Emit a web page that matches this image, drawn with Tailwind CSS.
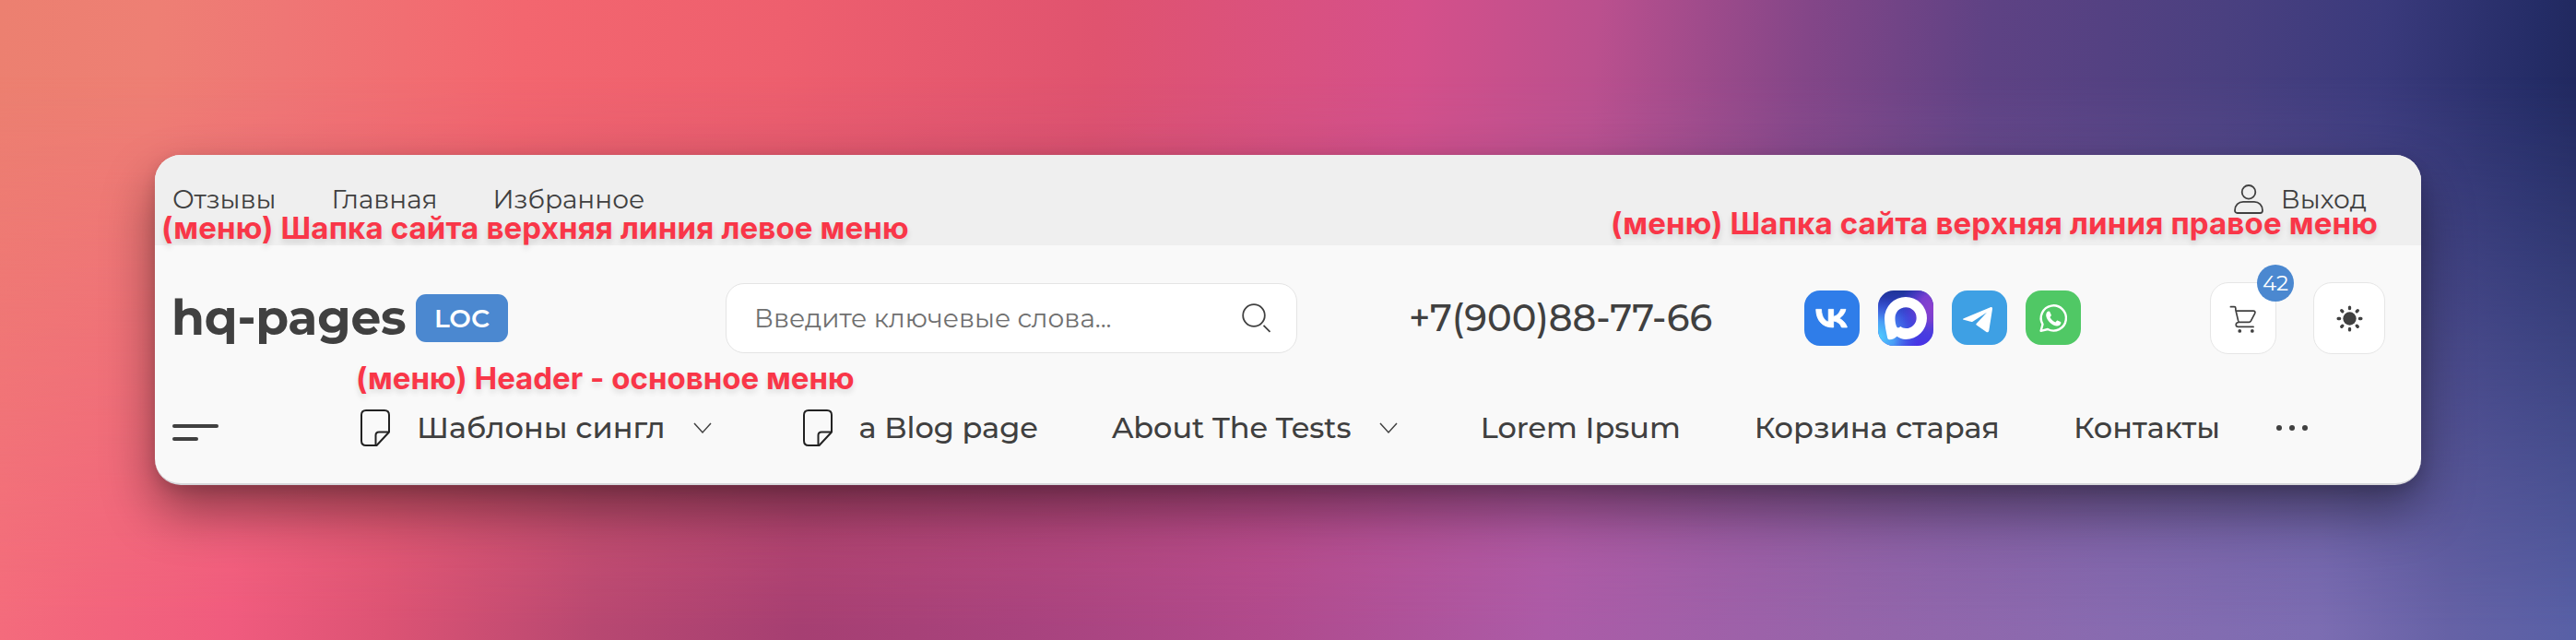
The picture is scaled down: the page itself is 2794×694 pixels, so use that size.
<!DOCTYPE html>
<html lang="ru">
<head>
    <meta charset="UTF-8">
    <meta name="viewport" content="width=device-width, initial-scale=1.0">
    <title>hq-pages</title>
    <script src="https://cdn.jsdelivr.net/npm/@tailwindcss/browser@4"></script>
</head>
<body class="font-['Montserrat','Inter',sans-serif] text-[#404040]">
    <div class="relative h-[694px] w-[2794px] overflow-hidden px-[168px] pt-[168px] bg-[linear-gradient(94deg,#ec8070_0%,#ee7f74_6%,#ef7675_11%,#f3666f_20%,#ee5f6e_30%,#e0536f_42%,#d5508a_54%,#bb508e_61%,#844688_69%,#5e4284_76%,#4a4080_85%,#3a3a7c_91%,#242c66_97%,#1e2558_100%)]">
        <!-- Lower half of the backdrop -->
        <div class="absolute inset-0 bg-[linear-gradient(90deg,#f46b7c_0%,#f05b7e_9%,#dc5374_15%,#b84871_23%,#a63f72_31%,#a8437e_40%,#b04a8c_49%,#ac5ba7_60%,#9565aa_72%,#886bb0_82%,#7c6db2_90%,#6662a6_95%,#5860a6_100%)] [mask-image:linear-gradient(to_bottom,transparent_12%,black_98%)]"></div>

        <header class="relative h-[358px] w-[2458px] rounded-[28px] border-b-2 border-[#d6d6da] bg-[#f9f9f9] shadow-[0_28px_56px_rgba(0,0,0,0.42),0_6px_16px_rgba(0,0,0,0.12)]">
            <!-- Top line -->
            <div class="flex h-[98px] items-center justify-between rounded-t-[28px] bg-[#efefef] pr-[59px] pb-[2px] pl-[19px] text-[28px]">
                <nav class="flex gap-[60px]">
                    <a href="#">Отзывы</a>
                    <a href="#">Главная</a>
                    <a href="#">Избранное</a>
                </nav>
                <a href="#" class="flex items-center gap-[19px]">
                    <svg class="h-8 w-8" viewBox="0 0 32 32" fill="none" stroke="#404040" stroke-width="1.8">
                        <circle cx="16" cy="8.3" r="7.3"/>
                        <path d="M1 28.2C1 22.5 5 18.9 10 18.9h12c5 0 9 3.6 9 9.3 0 1.7-1 2.8-2.6 2.8H3.6C2 31 1 29.9 1 28.2z"/>
                    </svg>
                    <span>Выход</span>
                </a>
            </div>

            <!-- Logo, search, contacts -->
            <div class="flex h-[158px] items-center pl-[18px]">
                <a href="#" class="flex w-[601px] items-center">
                    <span class="w-[265px] text-[52px] font-bold tracking-[-0.3px]">hq-pages</span>
                    <span class="flex h-[52px] w-[100px] items-center justify-center rounded-[11px] bg-[#4b88d0] text-[28px] font-semibold text-white">LOC</span>
                </a>
                <div class="flex h-[76px] w-[620px] items-center justify-between rounded-[20px] border-[1.5px] border-[#e4e4e4] bg-white pr-[27px] pl-[30px] text-[28px] text-[#707070]">
                    <span>Введите ключевые слова...</span>
                    <svg class="h-8 w-8" viewBox="0 0 32 32" fill="none" stroke="#404040" stroke-width="1.8">
                        <circle cx="13" cy="13" r="11.8"/>
                        <path d="M23.5 23.8l7 7"/>
                    </svg>
                </div>
                <a href="#" class="ml-[121px] w-[429px] text-[40px] font-medium">+7(900)88-77-66</a>
                <div class="flex gap-5">
                    <svg class="size-[60px]" viewBox="0 0 60 60">
                        <rect width="60" height="60" rx="17" fill="#2f7de9"/>
                        <path transform="translate(7.7 10.2) scale(1.8 1.7)" fill="#fff" stroke="#fff" stroke-width=".5" stroke-linejoin="round" d="M12.9 17.5C6.6 17.5 3 13.2 2.8 6h3.2c.1 5.3 2.4 7.5 4.3 8V6h3v4.6c1.8-.2 3.7-2.3 4.4-4.6h3c-.5 2.8-2.6 4.9-4 5.8 1.5.7 3.9 2.5 4.8 5.7h-3.3c-.7-2.2-2.5-3.8-4.9-4.1v4.1h-.4z"/>
                    </svg>
                    <svg class="size-[60px]" viewBox="0 0 60 60">
                        <defs>
                            <radialGradient id="maxCyan" cx="0" cy=".85" r=".75">
                                <stop offset="0" stop-color="#4fd0ff"/>
                                <stop offset=".4" stop-color="#4a9cf5"/>
                                <stop offset="1" stop-color="#3a50e0" stop-opacity="0"/>
                            </radialGradient>
                            <radialGradient id="maxViolet" cx="1" cy=".3" r=".6">
                                <stop offset="0" stop-color="#8c3fce"/>
                                <stop offset=".4" stop-color="#7a3fd0"/>
                                <stop offset="1" stop-color="#4a38e0" stop-opacity="0"/>
                            </radialGradient>
                            <linearGradient id="maxBase" x1="0" y1="0" x2="0" y2="1">
                                <stop offset="0" stop-color="#1e3499"/>
                                <stop offset=".5" stop-color="#3a48d8"/>
                                <stop offset="1" stop-color="#4a32e6"/>
                            </linearGradient>
                        </defs>
                        <rect width="60" height="60" rx="17" fill="url(#maxBase)"/>
                        <rect width="60" height="60" rx="17" fill="url(#maxCyan)"/>
                        <rect width="60" height="60" rx="17" fill="url(#maxViolet)"/>
                        <path fill="#fff" fill-rule="evenodd" d="M30 7a23 23 0 0 1 0 46c-4 0-6.8-1.2-9.5-3.2-1.8 2-5.3 3.6-8.3 3.4-1.4-.1-1.9-1-2.1-2.2C9 45 7 38 7 30A23 23 0 0 1 30 7zM30.2 18.2c-7 0-11.4 5-11.7 11.3-.2 4 1 9.8 2.6 10.8 1 .5 2.4-.5 3.2-1.2 1.6 1.1 3.3 2 5.9 2a11.45 11.45 0 0 0 0-22.9z"/>
                    </svg>
                    <svg class="size-[60px]" viewBox="0 0 60 60">
                        <rect width="60" height="59" rx="17" fill="#3ea0e4"/>
                        <path fill="#fff" d="M13 30.2L41.8 18.2c1.6-.6 2.5.2 2.2 1.8L40.3 43.5c-.4 1.9-1.7 2.2-3.2 1.2L26.8 37.5c-.7-.5-.7-1 0-1.7L38 23.8 23 33.4c-.9.6-1.7.7-2.7.4L13 31.8c-1.5-.4-1.3-1 0-1.6z"/>
                    </svg>
                    <svg class="size-[60px]" viewBox="0 0 60 60">
                        <rect width="60" height="59" rx="17" fill="#50c865"/>
                        <path fill="none" stroke="#fff" stroke-width="2.4" stroke-linejoin="round" d="M16.6 43.8l1.9-7.1A13.6 13.6 0 1 1 24 42z"/>
                        <path fill="#fff" d="M24.9 22.6c.8-.1 1.3.1 1.6.8l1.3 3.1c.2.5 0 1-1.4 2.5 1.5 2.7 3.3 4.3 6 5.4 1.4-1.5 1.7-2.1 2.2-1.9l3.3 1.6c.5.3.6.6.4 1.5-.4 2-2.3 3-4.2 3-5.2-.3-11.5-6.3-11.9-11.6 0-2 .9-4.1 2.7-4.4z"/>
                    </svg>
                </div>
                <div class="relative ml-[140px] flex h-[78px] w-[72px] items-center justify-center rounded-[20px] border-[1.5px] border-[#e6e6e6] bg-white">
                    <svg class="mt-[1px] mr-px size-[30px]" viewBox="0 0 32 32" fill="none" stroke="#404040" stroke-width="1.8" stroke-linecap="round" stroke-linejoin="round">
                        <path d="M1.5 1.8h4.2c1.3 0 1.6.6 1.6 1.7v1.9l3 12.6c.3 1 .9 1.6 2 1.6h10.4c1 0 1.7-.3 2.2-1.3l4.6-8.8c.8-1.7.1-2.9-1.7-2.9H7.6M11 19.6c-2.3.3-3.3 1.5-3.3 2.9s1 2.5 2.6 2.5h17.5"/>
                        <circle cx="12" cy="29.8" r="1.1" fill="#404040"/>
                        <circle cx="26.5" cy="29.8" r="1.1" fill="#404040"/>
                    </svg>
                    <span class="absolute -top-[20px] -right-[20px] flex size-10 items-center justify-center rounded-full bg-[#4b88d0] text-[23px] text-white">42</span>
                </div>
                <div class="ml-10 flex h-[78px] w-[78px] items-center justify-center rounded-[20px] border-[1.5px] border-[#e6e6e6] bg-white">
                    <svg class="size-[31px]" viewBox="0 0 32 32" stroke="#404040" stroke-width="3.4" stroke-linecap="round">
                        <circle cx="16" cy="16" r="7.4" fill="#404040" stroke="none"/>
                        <path d="M16 3.2v1.6M16 27.2v1.6M3.2 16h1.6M27.2 16h1.6M7 7l1 1M24 24l1 1M7 25l1-1M24 8l1-1"/>
                    </svg>
                </div>
            </div>

            <!-- Main menu -->
            <nav class="flex h-20 items-center gap-20 pl-[19px] text-[32px] font-medium">
                <div class="mt-[10px] flex w-[120px] flex-col gap-[10px]">
                    <span class="h-1 w-[50px] rounded-full bg-[#404040]"></span>
                    <span class="h-1 w-7 rounded-full bg-[#404040]"></span>
                </div>
                <a href="#" class="flex items-center pl-1">
                    <svg class="mr-[29px] h-10 w-8" viewBox="0 0 32 40" fill="none" stroke="#222" stroke-width="2" stroke-linejoin="round">
                        <path d="M31 24.5V6c0-3.2-1.8-5-5-5H6C2.8 1 1 2.800 1 6v28c0 3.2 1.8 5 5 5h11.5L31 24.5z"/>
                        <path d="M16.5 38.5V28c0-2.300 1-3.5 3.5-3.5h10.5"/>
                    </svg>
                    <span>Шаблоны сингл</span>
                    <svg class="ml-[22px] h-9 w-9" viewBox="0 0 36 36" fill="none" stroke="#404040" stroke-width="1.5"><path d="M9 13l9 10 9-10"/></svg>
                </a>
                <a href="#" class="flex items-center pl-[11px]">
                    <svg class="mr-[29px] h-10 w-8" viewBox="0 0 32 40" fill="none" stroke="#222" stroke-width="2" stroke-linejoin="round">
                        <path d="M31 24.5V6c0-3.2-1.8-5-5-5H6C2.8 1 1 2.8 1 6v28c0 3.2 1.8 5 5 5h11.5L31 24.5z"/>
                        <path d="M16.5 38.5V28c0-2.3 1-3.5 3.5-3.5h10.5"/>
                    </svg>
                    <span>a Blog page</span>
                </a>
                <a href="#" class="flex items-center">
                    <span>About The Tests</span>
                    <svg class="mr-[2px] ml-[22px] h-9 w-9" viewBox="0 0 36 36" fill="none" stroke="#404040" stroke-width="1.5"><path d="M9 13l9 10 9-10"/></svg>
                </a>
                <a href="#">Lorem Ipsum</a>
                <a href="#">Корзина старая</a>
                <a href="#">Контакты</a>
                <svg class="-ml-5 h-2 w-9" viewBox="0 0 36 8" fill="#404040">
                    <circle cx="4" cy="4" r="3"/>
                    <circle cx="18" cy="4" r="3"/>
                    <circle cx="32" cy="4" r="3"/>
                </svg>
            </nav>

            <!-- Labels over the menus -->
            <div class="font-['Inter',sans-serif] text-[33px] leading-10 font-bold whitespace-nowrap text-[#f93648] [text-shadow:0_4px_6px_rgba(0,0,0,0.12)]">
                <span class="absolute top-[59px] left-[7px] tracking-[0.15px]">(меню) Шапка сайта верхняя линия левое меню</span>
                <span class="absolute top-[54px] left-[1579px] tracking-[0.15px]">(меню) Шапка сайта верхняя линия правое меню</span>
                <span class="absolute top-[222px] left-[218px]">(меню) Header - основное меню</span>
            </div>
        </header>
    </div>
</body>
</html>
